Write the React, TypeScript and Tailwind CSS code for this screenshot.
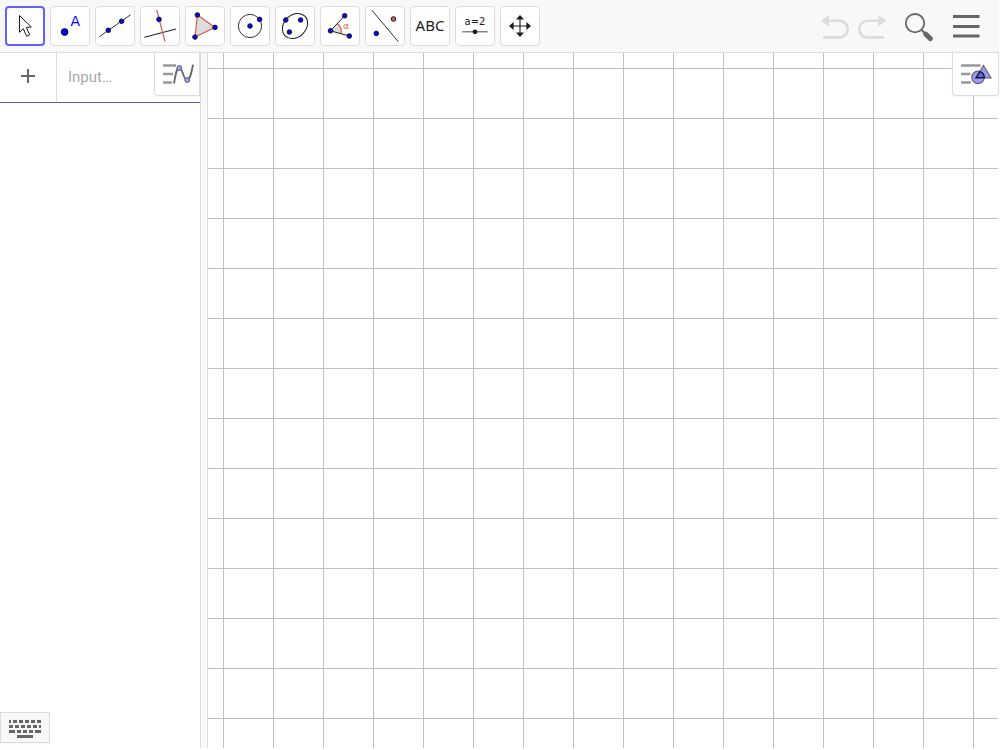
import { useState } from 'react';
import type { ReactNode } from 'react';
import clsx from 'clsx';

const INK = '#1c1c1f';
const BLUE = '#0000ff';
const RED = '#d35f4e';
const GRAY = '#666666';

function Icon({ children }: { children: ReactNode }) {
  return (
    <svg viewBox="0 0 32 32" fill="none" aria-hidden="true" className="size-8 shrink-0 overflow-visible">
      {children}
    </svg>
  );
}

function Dot({ x, y, r = 2.3, fill = BLUE }: { x: number; y: number; r?: number; fill?: string }) {
  return <circle cx={x} cy={y} r={r} fill={fill} stroke={INK} strokeWidth={1} />;
}

interface Tool {
  id: string;
  label: string;
  icon: ReactNode;
}

const TOOLS: Tool[] = [
  {
    id: 'move',
    label: 'Move',
    icon: (
      <path
        d="M10.5 5.5v16.8l3.8-3.6 3.3 7.6 3.1-1.4-3.4-7.5 5-.4z"
        fill="#fff"
        stroke={INK}
        strokeWidth={1}
      />
    ),
  },
  {
    id: 'point',
    label: 'Point',
    icon: (
      <>
        <Dot x={10.6} y={22} r={3.4} />
        <text x={16.6} y={15.5} fill={BLUE} className="font-['DejaVu_Sans',sans-serif] text-[14px]">
          A
        </text>
      </>
    ),
  },
  {
    id: 'line',
    label: 'Line',
    icon: (
      <>
        <path d="M.3 26.7 31.7 4.7" stroke={INK} strokeWidth={0.9} />
        <Dot x={9.3} y={20.3} />
        <Dot x={22.6} y={11.3} />
      </>
    ),
  },
  {
    id: 'perpendicular',
    label: 'Perpendicular Line',
    icon: (
      <>
        <path d="M.3 27.3 32 19" stroke={INK} />
        <path d="M12.7 0 21 31.7" stroke={RED} strokeWidth={1.2} />
        <Dot x={15} y={9.4} />
      </>
    ),
  },
  {
    id: 'polygon',
    label: 'Polygon',
    icon: (
      <>
        <path d="M8.4 5 26 17.4 6 27z" fill="#dcdcdc" stroke={RED} strokeWidth={1.2} />
        <Dot x={8.4} y={5} />
        <Dot x={26} y={17.4} />
        <Dot x={6} y={27} />
      </>
    ),
  },
  {
    id: 'circle',
    label: 'Circle with Center',
    icon: (
      <>
        <circle cx={16} cy={16} r={11.6} stroke={INK} strokeWidth={0.9} />
        <Dot x={16} y={16} />
        <Dot x={25.6} y={9.4} />
      </>
    ),
  },
  {
    id: 'ellipse',
    label: 'Ellipse',
    icon: (
      <>
        <ellipse cx={16} cy={16} rx={14} ry={11} transform="rotate(-45 16 16)" stroke={INK} />
        <Dot x={6.8} y={10} />
        <Dot x={21.6} y={10} />
        <Dot x={10.4} y={22} />
      </>
    ),
  },
  {
    id: 'angle',
    label: 'Angle',
    icon: (
      <>
        <path d="M6.5 20.8 13.4 13.8A9.8 9.8 0 0 1 17 23.6z" fill="#dcdcdc" />
        <path d="M13.4 13.8A9.8 9.8 0 0 1 17 23.6" stroke={RED} strokeWidth={1.2} />
        <path d="M20.7 5.7 6.5 20.8 25.3 26" stroke={INK} />
        <Dot x={20.7} y={5.8} />
        <Dot x={6.5} y={20.8} />
        <Dot x={25.3} y={26} />
        <text x={19} y={19} fill={RED} className="font-['DejaVu_Sans',sans-serif] text-[9px]">
          α
        </text>
      </>
    ),
  },
  {
    id: 'reflect',
    label: 'Reflect about Line',
    icon: (
      <>
        <path d="M2.7 0 29.3 31.7" stroke={INK} strokeWidth={0.9} />
        <Dot x={24.5} y={9} fill={RED} />
        <Dot x={7.3} y={23.4} />
      </>
    ),
  },
  {
    id: 'text',
    label: 'Text',
    icon: (
      <text x={16} y={21.4} textAnchor="middle" fill={INK} className="font-['Noto_Sans',sans-serif] text-[15px]">
        ABC
      </text>
    ),
  },
  {
    id: 'slider',
    label: 'Slider',
    icon: (
      <>
        <text x={16} y={15} textAnchor="middle" fill={INK} className="font-['DejaVu_Sans',sans-serif] text-[10px]">
          a=2
        </text>
        <path d="M3.3 21.8h25.4" stroke={GRAY} strokeWidth={1.2} />
        <circle cx={16} cy={21.8} r={2.4} fill={INK} />
      </>
    ),
  },
  {
    id: 'move-view',
    label: 'Move Graphics View',
    icon: (
      <>
        <path d="M16 8v16M8 16h16" stroke={INK} strokeWidth={1.1} />
        <path
          d="M16 5l4 4.6h-8zM16 27l4-4.6h-8zM5 16l4.6-4v8zM27 16l-4.6-4v8z"
          fill={INK}
        />
      </>
    ),
  },
];

// [x, y, width] of each key in the keyboard icon
const KEYS = [
  [0, 0, 2], [4, 0, 4], [10, 0, 4], [16, 0, 4], [22, 0, 4], [28, 0, 4],
  [0, 5, 4], [6, 5, 4], [12, 5, 4], [18, 5, 4], [24, 5, 4], [30, 5, 2],
  [0, 10, 6], [8, 10, 4], [14, 10, 4], [20, 10, 4], [26, 10, 6],
  [8, 15, 16],
];

function Toolbar() {
  const [active, setActive] = useState('move');

  return (
    <header className="flex h-[53px] shrink-0 items-center justify-between border-b border-[#dcdcdc] bg-[#f8f8f8] pr-2 pl-[5px]">
      <div className="flex gap-[5px]">
        {TOOLS.map((tool) => (
          <button
            key={tool.id}
            type="button"
            aria-label={tool.label}
            aria-pressed={active === tool.id}
            onClick={() => setActive(tool.id)}
            className={clsx(
              'flex size-10 items-center justify-center rounded bg-white',
              active === tool.id ? 'border-2 border-[#6161ff]' : 'border border-[#dcdcdc]'
            )}
          >
            <Icon>{tool.icon}</Icon>
          </button>
        ))}
      </div>

      <div className="flex">
        <button type="button" aria-label="Undo" disabled className="flex h-10 w-10 items-center justify-center">
          <Icon>
            <path d="M8 10.8h12.5a8.3 8.3 0 0 1 0 16.6H4" stroke="#dcdcdc" strokeWidth={2.6} />
            <path d="M2 10.8 10 5.2v11.2z" fill="#dcdcdc" />
          </Icon>
        </button>
        <button type="button" aria-label="Redo" disabled className="flex h-10 w-10 items-center justify-center">
          <Icon>
            <path d="M21 10.8H8.5a8.3 8.3 0 0 0 0 16.6H25" stroke="#dcdcdc" strokeWidth={2.6} />
            <path d="M27.4 10.8 19.4 5.2v11.2z" fill="#dcdcdc" />
          </Icon>
        </button>
        <button type="button" aria-label="Search" className="flex h-10 w-12 items-center justify-center">
          <Icon>
            <circle cx={12} cy={13.2} r={9.2} stroke={GRAY} strokeWidth={1.8} />
            <path d="M18.6 20l4 4" stroke={GRAY} strokeWidth={2} />
            <path d="M22.8 24.2l4.6 4.4" stroke={GRAY} strokeWidth={5} strokeLinecap="round" />
          </Icon>
        </button>
        <button type="button" aria-label="Menu" className="flex h-10 w-12 items-center justify-center">
          <Icon>
            <path d="M2 6.5h26.5M2 16.5h26.5M2 26h26.5" stroke={GRAY} strokeWidth={3} />
          </Icon>
        </button>
      </div>
    </header>
  );
}

function AlgebraView() {
  const [value, setValue] = useState('');

  return (
    <section className="relative flex w-[200px] shrink-0 flex-col bg-white">
      <div className="flex h-[50px] border-b border-[#6557d2]">
        <button type="button" aria-label="Add" className="flex w-14 shrink-0 items-center justify-center pb-[3px]">
          <svg viewBox="0 0 14 14" aria-hidden="true" className="size-3.5">
            <path d="M7 0v14M0 7h14" stroke={GRAY} strokeWidth={2} />
          </svg>
        </button>
        <input
          type="text"
          aria-label="Input"
          placeholder="Input…"
          value={value}
          onChange={(e) => setValue(e.target.value)}
          className="min-w-0 flex-1 border-l border-[#dcdcdc] pl-[11px] font-['Roboto',sans-serif] text-[15px] text-[#1c1c1f] outline-none placeholder:text-[#a8a8a8]"
        />
        <button
          type="button"
          aria-label="Algebra style bar"
          className="flex h-[43px] w-[46px] shrink-0 items-center justify-center rounded-bl border-x border-b border-[#dcdcdc] shadow-xs"
        >
          <Icon>
            <path d="M2 7.5h13M2 16h10M2 24.5h9" stroke="#999" strokeWidth={2.5} />
            <path
              d="M13 25.5C14.5 17 15.5 9.8 18.3 9.8 21.5 9.8 22.5 22 26 22 29 22 30.5 15 32 6.7"
              stroke={GRAY}
              strokeWidth={1.8}
            />
            <circle cx={18.3} cy={10} r={2.5} fill="#9999ff" stroke={GRAY} />
            <circle cx={26.3} cy={22} r={2.5} fill="#9999ff" stroke={GRAY} />
          </Icon>
        </button>
      </div>

      <button
        type="button"
        aria-label="Open keyboard"
        className="absolute bottom-[5px] left-0 flex h-[31px] w-[50px] items-center justify-center border border-[#dcdcdc] bg-[#f8f8f8] pt-[3px] shadow-xs"
      >
        <svg viewBox="0 0 32 18" aria-hidden="true" className="h-[18px] w-8">
          {KEYS.map(([x, y, w]) => (
            <rect key={`${x}-${y}`} x={x} y={y} width={w} height={3} fill={GRAY} />
          ))}
        </svg>
      </button>
    </section>
  );
}

function GraphicsView() {
  return (
    <section
      aria-label="Graphics View"
      className="flex-1 bg-white bg-[linear-gradient(to_right,#c0c0c0_1px,transparent_1px),linear-gradient(to_bottom,#c0c0c0_1px,transparent_1px)] bg-[length:50px_50px] bg-[position:15px_15px]"
    />
  );
}

function App() {
  return (
    <div className="flex h-screen flex-col bg-white pr-px pb-0.5">
      <Toolbar />
      <main className="relative flex flex-1 pr-px">
        <AlgebraView />
        <div className="w-2 shrink-0 cursor-col-resize border-x border-[#dcdcdc] bg-[#f8f8f8]" />
        <GraphicsView />
        <button
          type="button"
          aria-label="Graphics style bar"
          className="absolute top-0 right-0 flex h-[43px] w-[47px] items-center justify-center rounded-b border-x border-b border-[#dcdcdc] bg-white shadow-xs"
        >
          <Icon>
            <path d="M1 7.5h19.5M1 16h9.5M1 24.5h10" stroke="#999" strokeWidth={2.5} />
            <path d="M23.5 7.5 31 19.8H16z" fill="#9999ff" stroke={GRAY} strokeWidth={1.2} />
            <circle cx={18} cy={19.4} r={6.2} fill="#9999ff" stroke={GRAY} strokeWidth={1.2} />
            <path d="M19.8 13.6a6.2 6.2 0 0 1 4.4 6.2H16z" fill="#6666ff" stroke={INK} strokeWidth={1.4} />
          </Icon>
        </button>
      </main>
    </div>
  );
}

export default App;
